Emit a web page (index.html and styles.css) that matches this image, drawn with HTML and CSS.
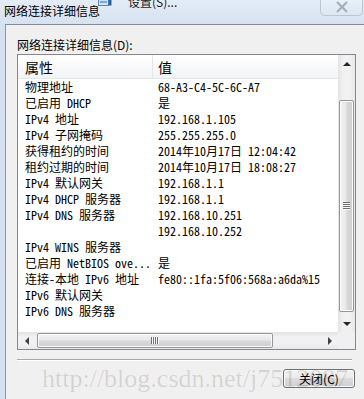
FILE: index.html
```html
<!DOCTYPE html>
<html lang="zh-CN">
<head>
    <meta charset="UTF-8">
    <title>网络连接详细信息</title>
    <link rel="stylesheet" href="styles.css">
</head>
<body>
    <div class="window">
        <div class="titlebar">
            <div class="title">网络连接详细信息</div>
            <div class="tb-icon">
                <svg width="14" height="14" viewBox="0 0 14 14">
                    <rect x="0.5" y="0.5" width="10" height="13" fill="#cfe3f7" stroke="#5a86b8"/>
                    <rect x="10.5" y="2.5" width="3" height="11" fill="#2f5f9e"/>
                    <rect x="2" y="9" width="7" height="2" fill="#7fa6d3"/>
                </svg>
            </div>
            <div class="tb-text">设置(S)...</div>
            <div class="close-btn">
                <svg width="14" height="12" viewBox="0 0 14 12">
                    <path d="M2 1 L12 11 M12 1 L2 11" stroke="#a3afbd" stroke-width="2.2" fill="none"/>
                </svg>
            </div>
        </div>
        <div class="frame">
            <div class="client">
                <div class="label">网络连接详细信息(D):</div>
                <div class="listview">
                    <div class="lv-main">
                        <div class="lv-body">
                            <div class="lv-header">
                                <div class="col1">属性</div>
                                <div class="col2">值</div>
                            </div>
                            <div class="row"><div class="col1">物理地址</div><div class="col2">68-A3-C4-5C-6C-A7</div></div>
                            <div class="row"><div class="col1">已启用 DHCP</div><div class="col2">是</div></div>
                            <div class="row"><div class="col1">IPv4 地址</div><div class="col2">192.168.1.105</div></div>
                            <div class="row"><div class="col1">IPv4 子网掩码</div><div class="col2">255.255.255.0</div></div>
                            <div class="row"><div class="col1">获得租约的时间</div><div class="col2">2014年10月17日 12:04:42</div></div>
                            <div class="row"><div class="col1">租约过期的时间</div><div class="col2">2014年10月17日 18:08:27</div></div>
                            <div class="row"><div class="col1">IPv4 默认网关</div><div class="col2">192.168.1.1</div></div>
                            <div class="row"><div class="col1">IPv4 DHCP 服务器</div><div class="col2">192.168.1.1</div></div>
                            <div class="row"><div class="col1">IPv4 DNS 服务器</div><div class="col2">192.168.10.251</div></div>
                            <div class="row"><div class="col1"></div><div class="col2">192.168.10.252</div></div>
                            <div class="row"><div class="col1">IPv4 WINS 服务器</div><div class="col2"></div></div>
                            <div class="row"><div class="col1">已启用 NetBIOS ove...</div><div class="col2">是</div></div>
                            <div class="row"><div class="col1">连接-本地 IPv6 地址</div><div class="col2">fe80::1fa:5f06:568a:a6da%15</div></div>
                            <div class="row"><div class="col1">IPv6 默认网关</div><div class="col2"></div></div>
                            <div class="row"><div class="col1">IPv6 DNS 服务器</div><div class="col2"></div></div>
                        </div>
                        <div class="vscroll">
                            <div class="sb-btn"><span class="arrow-up"></span></div>
                            <div class="vs-track">
                                <div class="thumb"><span class="grip-h"></span></div>
                            </div>
                            <div class="sb-btn"><span class="arrow-down"></span></div>
                        </div>
                    </div>
                    <div class="hscroll">
                        <div class="sb-btn"><span class="arrow-left"></span></div>
                        <div class="hs-track">
                            <div class="thumb"><span class="grip-v"></span></div>
                        </div>
                        <div class="sb-btn"><span class="arrow-right"></span></div>
                        <div class="corner"></div>
                    </div>
                </div>
                <div class="sep"></div>
                <div class="footer">
                    <button class="btn">关闭(C)</button>
                </div>
                <div class="watermark">http://blog.csdn.net/j7512087</div>
            </div>
        </div>
    </div>
</body>
</html>
```

FILE: styles.css
```css
* {
    box-sizing: border-box;
}
body {
    margin: 0;
    width: 364px;
    height: 399px;
    overflow: hidden;
    font-family: "Noto Sans CJK SC", sans-serif;
    font-size: 12px;
    color: #000;
}
.window {
    width: 364px;
    height: 399px;
    display: flex;
    flex-direction: column;
    background: #d5e1ee;
}
.titlebar {
    height: 24px;
    display: flex;
    align-items: flex-start;
    background: linear-gradient(#e4ecf6, #d6e2ef);
    overflow: hidden;
}
.title {
    padding: 3px 0 0 4px;
    line-height: 16px;
    white-space: nowrap;
}
.tb-icon {
    margin: -8px 0 0 -2px;
    height: 14px;
}
.tb-icon svg {
    display: block;
}
.tb-text {
    margin: -6px 0 0 16px;
    line-height: 16px;
    color: #1a1a1a;
    white-space: nowrap;
}
.close-btn {
    margin: -1px 1px 0 auto;
    width: 43px;
    height: 17px;
    border: 1px solid #b9c5d3;
    border-top: none;
    border-radius: 0 0 5px 5px;
    background: linear-gradient(#e9f0f8, #dde7f2);
    display: flex;
    justify-content: center;
    align-items: center;
}
.frame {
    flex: 1;
    display: flex;
    padding-left: 5px;
}
.client {
    flex: 1;
    position: relative;
    border-top: 1px solid #7f8c9b;
    border-left: 1px solid #8a97a6;
    background: #f0f0f0;
    padding: 12px 0 0 11px;
}
.label {
    line-height: 16px;
}
.listview {
    margin-top: 1px;
    width: 339px;
    height: 296px;
    border: 1px solid #828790;
    background: #fff;
    display: flex;
    flex-direction: column;
}
.lv-main {
    flex: 1;
    display: flex;
    min-height: 0;
}
.lv-body {
    flex: 1;
    overflow: hidden;
    font-family: "Noto Sans Mono CJK SC", "Liberation Mono", "Noto Sans CJK SC", monospace;
}
.lv-header {
    height: 24px;
    display: flex;
    align-items: center;
    border-bottom: 1px solid #e5e5e5;
    background: linear-gradient(#ffffff, #f3f4f6);
    font-family: "Noto Sans CJK SC", sans-serif;
    font-size: 14px;
}
.lv-header .col1 {
    height: 100%;
    display: flex;
    align-items: center;
    border-right: 1px solid #e3e5e8;
}
.col1 {
    width: 135px;
    padding-left: 7px;
    white-space: nowrap;
}
.col2 {
    flex: 1;
    padding-left: 5px;
    white-space: nowrap;
}
.row {
    height: 16px;
    line-height: 16px;
    display: flex;
}
.vscroll {
    width: 17px;
    display: flex;
    flex-direction: column;
    background: linear-gradient(to right, #e3e3e3, #f1f1f1 30%, #f1f1f1 70%, #e8e8e8);
}
.sb-btn {
    width: 17px;
    height: 17px;
    display: flex;
    justify-content: center;
    align-items: center;
    flex-shrink: 0;
}
.vs-track {
    flex: 1;
    display: flex;
    flex-direction: column;
    padding: 28px 1px 3px 1px;
}
.vs-track .thumb {
    flex: 1;
    border: 1px solid #969696;
    border-radius: 2px;
    background: linear-gradient(to right, #f3f3f3, #e8e8e8 45%, #d8d8d8 55%, #cfcfcf);
    box-shadow: inset 0 0 0 1px #fbfbfb;
    display: flex;
    justify-content: center;
    align-items: center;
}
.grip-h {
    width: 7px;
    height: 8px;
    background: repeating-linear-gradient(#6e6e6e 0 1px, #fafafa 1px 2px);
}
.grip-v {
    width: 8px;
    height: 7px;
    background: repeating-linear-gradient(to right, #6e6e6e 0 1px, #fafafa 1px 2px);
}
.hscroll {
    height: 17px;
    display: flex;
    background: linear-gradient(#e3e3e3, #f1f1f1 30%, #f1f1f1 70%, #e8e8e8);
}
.hs-track {
    flex: 1;
    display: flex;
    padding: 1px 0 1px 2px;
}
.hs-track .thumb {
    width: 236px;
    border: 1px solid #969696;
    border-radius: 2px;
    background: linear-gradient(#f3f3f3, #e8e8e8 45%, #d8d8d8 55%, #cfcfcf);
    box-shadow: inset 0 0 0 1px #fbfbfb;
    display: flex;
    justify-content: center;
    align-items: center;
}
.corner {
    width: 17px;
    background: #f0f0f0;
}
.arrow-up {
    border-left: 4px solid transparent;
    border-right: 4px solid transparent;
    border-bottom: 4px solid #262626;
}
.arrow-down {
    border-left: 4px solid transparent;
    border-right: 4px solid transparent;
    border-top: 4px solid #262626;
}
.arrow-left {
    border-top: 4px solid transparent;
    border-bottom: 4px solid transparent;
    border-right: 4px solid #404040;
}
.arrow-right {
    border-top: 4px solid transparent;
    border-bottom: 4px solid transparent;
    border-left: 4px solid #404040;
}
.sep {
    margin-top: 9px;
    width: 335px;
    height: 2px;
    border-top: 1px solid #a8a8a8;
    border-bottom: 1px solid #ffffff;
}
.footer {
    width: 338px;
    margin-top: 8px;
    display: flex;
    justify-content: flex-end;
}
.btn {
    width: 72px;
    height: 19px;
    padding: 0;
    border: 1px solid #707070;
    border-radius: 3px;
    background: linear-gradient(#f2f2f2, #ebebeb 50%, #dddddd 50%, #cfcfcf);
    box-shadow: inset 0 0 0 1px #fcfcfc;
    font-family: "Noto Sans CJK SC", sans-serif;
    font-size: 12px;
    line-height: 17px;
    color: #000;
}
.watermark {
    position: absolute;
    left: 36px;
    top: 339px;
    font-family: "Liberation Serif", serif;
    font-size: 26px;
    line-height: 30px;
    color: rgba(0, 0, 0, 0.12);
    white-space: nowrap;
    pointer-events: none;
}
```
